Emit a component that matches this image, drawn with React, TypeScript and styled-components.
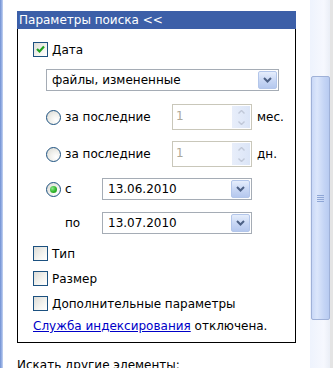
import React from 'react';
import styled, { createGlobalStyle, css } from 'styled-components';

const GlobalStyle = createGlobalStyle`
  html, body {
    margin: 0;
    padding: 0;
    background: #fff;
    overflow: hidden;
  }
  body {
    font-family: 'DejaVu Sans', Tahoma, sans-serif;
    font-size: 12px;
    color: #000;
  }
`;

const Page = styled.div`
  display: flex;
  width: 333px;
  height: 368px;
  overflow: hidden;
  background: #fff;
`;

const Strip = styled.div`
  width: 3px;
  flex-shrink: 0;
  background: linear-gradient(90deg, #6f8fd2 0%, #9db5e6 60%, #c9d7f2 100%);
`;

const Main = styled.div`
  flex: 1;
  padding: 11px 0 0 14px;
`;

const Panel = styled.div`
  width: 279px;
`;

const Header = styled.div`
  height: 18px;
  line-height: 18px;
  background: #3c5fa8;
  color: #fff;
  padding-left: 2px;
  white-space: nowrap;
`;

const Body = styled.div`
  border: 1px solid #000;
  border-top: none;
  height: 314px;
  box-sizing: border-box;
  padding: 13px 0 0 15px;
`;

const Row = styled.div<{ $top?: number; $indent?: number }>`
  display: flex;
  align-items: center;
  margin-top: ${(p) => p.$top ?? 0}px;
  padding-left: ${(p) => p.$indent ?? 0}px;
  white-space: nowrap;
`;

const Box = styled.span`
  position: relative;
  width: 13px;
  height: 13px;
  border: 1px solid #1c5180;
  background: linear-gradient(135deg, #dcdcd7 0%, #f4f4f0 60%, #fff 100%);
  margin-right: 4px;
  flex-shrink: 0;
`;

const Check = () => (
  <svg width="11" height="11" viewBox="0 0 11 11" style={{ position: 'absolute', left: 1, top: 1 }}>
    <path d="M2 5 L4.5 7.5 L9 2.5" fill="none" stroke="#21a121" strokeWidth="2.2" />
  </svg>
);

const Radio = styled.span<{ $on?: boolean }>`
  position: relative;
  width: 13px;
  height: 13px;
  border-radius: 50%;
  border: 1px solid #1c5180;
  background: radial-gradient(circle at 70% 70%, #fff 0%, #f2f2ee 40%, #d6d6d0 100%);
  margin-right: 4px;
  flex-shrink: 0;
  ${(p) =>
    p.$on &&
    css`
      &::after {
        content: '';
        position: absolute;
        left: 3px;
        top: 3px;
        width: 7px;
        height: 7px;
        border-radius: 50%;
        background: radial-gradient(circle at 35% 35%, #8ee68a 0%, #2fb52a 55%, #1f8f1c 100%);
      }
    `}
`;

const Label = styled.span<{ $w?: number }>`
  display: inline-block;
  width: ${(p) => (p.$w ? `${p.$w}px` : 'auto')};
`;

const Combo = styled.div<{ $w: number }>`
  display: flex;
  align-items: center;
  width: ${(p) => p.$w}px;
  height: 22px;
  box-sizing: border-box;
  border: 1px solid #a5acb5;
  background: #fff;
  padding: 0 1px 0 5px;
`;

const ComboText = styled.span`
  flex: 1;
`;

const DropBtn = styled.span`
  display: flex;
  align-items: center;
  justify-content: center;
  width: 19px;
  height: 18px;
  box-sizing: border-box;
  border: 1px solid #b3c6ea;
  border-radius: 2px;
  background: linear-gradient(180deg, #e6eefc 0%, #c7d6f4 55%, #b5c8ee 100%);
`;

const Arrow = () => (
  <svg width="9" height="6" viewBox="0 0 9 6">
    <path d="M1 1 L4.5 4.5 L8 1" fill="none" stroke="#4d6185" strokeWidth="2" />
  </svg>
);

const Spin = styled.div`
  display: flex;
  align-items: stretch;
  width: 80px;
  height: 26px;
  box-sizing: border-box;
  border: 1px solid #c9c7ba;
  background: #fff;
  padding: 1px;
`;

const SpinText = styled.span`
  flex: 1;
  color: #aca899;
  padding-left: 2px;
  line-height: 20px;
`;

const SpinBtns = styled.div`
  width: 18px;
  display: flex;
  flex-direction: column;
  background: linear-gradient(90deg, #e8eefa 0%, #dbe5f7 100%);
`;

const SpinHalf = styled.span`
  flex: 1;
  display: flex;
  align-items: center;
  justify-content: center;
`;

const Unit = styled.span`
  margin-left: 5px;
`;

const Link = styled.a`
  color: #0000c8;
  text-decoration: underline;
`;

const Footer = styled.div`
  margin-top: 15px;
  white-space: nowrap;
`;

const ScrollBar = styled.div`
  width: 23px;
  flex-shrink: 0;
  display: flex;
  flex-direction: column;
  background: linear-gradient(90deg, #eef3fd 0%, #f6f8fe 60%, #eaeef6 87%, #e4e4e4 87%);
  box-sizing: border-box;
  padding: 76px 3px 0 1px;
`;

const Thumb = styled.div`
  height: 244px;
  box-sizing: border-box;
  border: 1px solid #9fb1d8;
  border-radius: 2px;
  background: linear-gradient(90deg, #c9d8f7 0%, #dbe6fb 30%, #c5d5f5 70%, #b8cbf1 100%);
  display: flex;
  align-items: center;
  justify-content: center;
`;

const Grip = () => (
  <svg width="7" height="8" viewBox="0 0 7 8">
    <path d="M0 1.5 H7 M0 3.5 H7 M0 5.5 H7 M0 7.5 H7" stroke="#8ea6d6" strokeWidth="1" />
  </svg>
);

const SpinBox = () => (
  <Spin>
    <SpinText>1</SpinText>
    <SpinBtns>
      <SpinHalf>
        <svg width="7" height="4" viewBox="0 0 7 4">
          <path d="M0.5 3.5 L3.5 0.5 L6.5 3.5" fill="none" stroke="#c0c8d8" strokeWidth="1.4" />
        </svg>
      </SpinHalf>
      <SpinHalf>
        <svg width="7" height="4" viewBox="0 0 7 4">
          <path d="M0.5 0.5 L3.5 3.5 L6.5 0.5" fill="none" stroke="#c0c8d8" strokeWidth="1.4" />
        </svg>
      </SpinHalf>
    </SpinBtns>
  </Spin>
);

export default function App() {
  return (
    <Page>
      <GlobalStyle />
      <Strip />
      <Main>
        <Panel>
          <Header>Параметры поиска &lt;&lt;</Header>
          <Body>
            <Row>
              <Box>
                <Check />
              </Box>
              Дата
            </Row>
            <Row $top={12} $indent={13}>
              <Combo $w={233}>
                <ComboText>файлы, измененные</ComboText>
                <DropBtn>
                  <Arrow />
                </DropBtn>
              </Combo>
            </Row>
            <Row $top={13} $indent={13}>
              <Radio />
              <Label $w={107}>за последние</Label>
              <SpinBox />
              <Unit>мес.</Unit>
            </Row>
            <Row $top={11} $indent={13}>
              <Radio />
              <Label $w={107}>за последние</Label>
              <SpinBox />
              <Unit>дн.</Unit>
            </Row>
            <Row $top={11} $indent={13}>
              <Radio $on />
              <Label $w={37}>с</Label>
              <Combo $w={150}>
                <ComboText>13.06.2010</ComboText>
                <DropBtn>
                  <Arrow />
                </DropBtn>
              </Combo>
            </Row>
            <Row $top={12} $indent={32}>
              <Label $w={37}>по</Label>
              <Combo $w={150}>
                <ComboText>13.07.2010</ComboText>
                <DropBtn>
                  <Arrow />
                </DropBtn>
              </Combo>
            </Row>
            <Row $top={12}>
              <Box />
              Тип
            </Row>
            <Row $top={10}>
              <Box />
              Размер
            </Row>
            <Row $top={10}>
              <Box />
              Дополнительные параметры
            </Row>
            <Row $top={8}>
              <span>
                <Link>Служба индексирования</Link> отключена.
              </span>
            </Row>
          </Body>
        </Panel>
        <Footer>Искать другие элементы:</Footer>
      </Main>
      <ScrollBar>
        <Thumb>
          <Grip />
        </Thumb>
      </ScrollBar>
    </Page>
  );
}
